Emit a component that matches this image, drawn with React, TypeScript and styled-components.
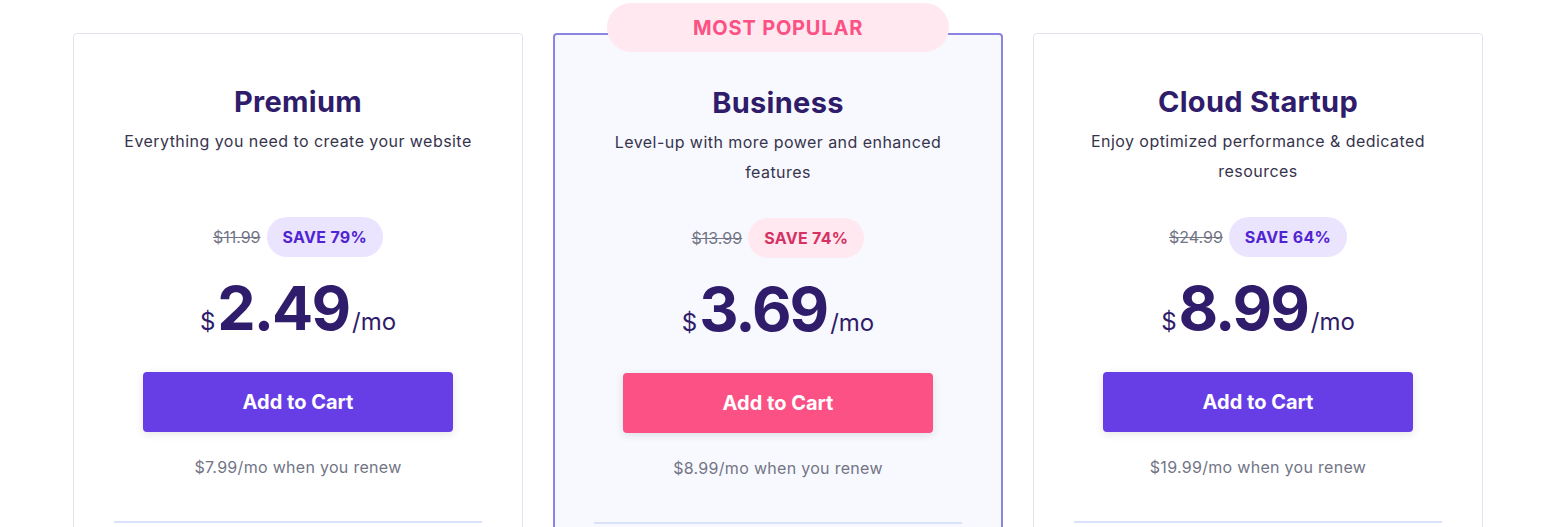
import styled, { createGlobalStyle } from "styled-components";

interface Plan {
  name: string;
  desc: string;
  oldPrice: string;
  save: string;
  price: string;
  renew: string;
  popular?: boolean;
}

const plans: Plan[] = [
  {
    name: "Premium",
    desc: "Everything you need to create your website",
    oldPrice: "$11.99",
    save: "SAVE 79%",
    price: "2.49",
    renew: "$7.99/mo when you renew",
  },
  {
    name: "Business",
    desc: "Level-up with more power and enhanced features",
    oldPrice: "$13.99",
    save: "SAVE 74%",
    price: "3.69",
    renew: "$8.99/mo when you renew",
    popular: true,
  },
  {
    name: "Cloud Startup",
    desc: "Enjoy optimized performance & dedicated resources",
    oldPrice: "$24.99",
    save: "SAVE 64%",
    price: "8.99",
    renew: "$19.99/mo when you renew",
  },
];

function App() {
  return (
    <>
      <GlobalStyle />
      <StyledPage>
        <StyledRow>
          {plans.map(plan => (
            <StyledCard key={plan.name} $popular={plan.popular}>
              {plan.popular && <StyledRibbon>MOST POPULAR</StyledRibbon>}
              <StyledTitle>{plan.name}</StyledTitle>
              <StyledDesc>{plan.desc}</StyledDesc>
              <StyledSaveRow>
                <StyledOld>{plan.oldPrice}</StyledOld>
                <StyledBadge $popular={plan.popular}>{plan.save}</StyledBadge>
              </StyledSaveRow>
              <StyledPrice>
                <StyledCurrency>$</StyledCurrency>
                <StyledAmount>{plan.price}</StyledAmount>
                <StyledPer>/mo</StyledPer>
              </StyledPrice>
              <StyledButton $popular={plan.popular}>Add to Cart</StyledButton>
              <StyledRenew>{plan.renew}</StyledRenew>
              <StyledDivider />
            </StyledCard>
          ))}
        </StyledRow>
      </StyledPage>
    </>
  );
}
export default App;

const GlobalStyle = createGlobalStyle`
  body {
    margin: 0;
    background: #ffffff;
    font-family: "Inter", "Noto Sans", sans-serif;
    overflow: hidden;
  }
`;

const StyledPage = styled.div`
  height: 527px;
  overflow: hidden;
  padding: 33px 0 0 73px;
  box-sizing: border-box;
`;

const StyledRow = styled.div`
  display: flex;
  gap: 30px;
  align-items: flex-start;
`;

const StyledCard = styled.div<{ $popular?: boolean }>`
  position: relative;
  width: 450px;
  min-height: 560px;
  box-sizing: border-box;
  display: flex;
  flex-direction: column;
  align-items: center;
  padding: ${p => (p.$popular ? "48px 39px 0" : "48px 40px 0")};
  border: ${p => (p.$popular ? "2px solid #8b84e2" : "1px solid #e1e4f0")};
  border-radius: 4px;
  background: ${p => (p.$popular ? "#f8f9fe" : "#ffffff")};
`;

const StyledRibbon = styled.div`
  position: absolute;
  top: -32px;
  left: 50%;
  transform: translateX(-50%);
  width: 342px;
  height: 49px;
  border-radius: 25px;
  background: #ffe8ef;
  color: #fc5185;
  font-size: 20px;
  font-weight: 700;
  letter-spacing: 0.8px;
  display: flex;
  align-items: center;
  justify-content: center;
`;

const StyledTitle = styled.h2`
  margin: 0 0 4px;
  font-size: 29px;
  line-height: 40px;
  font-weight: 700;
  letter-spacing: 0.3px;
  color: #2f1c6a;
`;

const StyledDesc = styled.p`
  margin: 0;
  min-height: 60px;
  max-width: 350px;
  font-size: 16px;
  line-height: 30px;
  letter-spacing: 0.45px;
  color: #36344d;
  text-align: center;
`;

const StyledSaveRow = styled.div`
  margin-top: 31px;
  display: flex;
  align-items: center;
  gap: 6px;
`;

const StyledOld = styled.span`
  font-size: 16px;
  color: #727586;
  text-decoration: line-through;
`;

const StyledBadge = styled.span<{ $popular?: boolean }>`
  height: 40px;
  padding: 0 16px;
  border-radius: 20px;
  display: flex;
  align-items: center;
  font-size: 16px;
  font-weight: 700;
  letter-spacing: 0.3px;
  background: ${p => (p.$popular ? "#ffe8ef" : "#ebe4ff")};
  color: ${p => (p.$popular ? "#d63163" : "#5025d1")};
`;

const StyledPrice = styled.div`
  margin-top: 15px;
  height: 72px;
  display: flex;
  align-items: baseline;
  color: #2f1c6a;
`;

const StyledCurrency = styled.span`
  font-size: 24px;
  margin-right: 2px;
`;

const StyledAmount = styled.span`
  font-size: 61px;
  line-height: 72px;
  font-weight: 700;
  letter-spacing: -2px;
`;

const StyledPer = styled.span`
  font-size: 24px;
  margin-left: 3px;
`;

const StyledButton = styled.button<{ $popular?: boolean }>`
  margin-top: 28px;
  width: 310px;
  height: 60px;
  border: none;
  border-radius: 4px;
  background: ${p => (p.$popular ? "#fc5185" : "#673de6")};
  color: #ffffff;
  font-family: inherit;
  font-size: 20px;
  font-weight: 700;
  box-shadow: 0 2px 8px rgba(29, 30, 32, 0.12);
  cursor: pointer;
`;

const StyledRenew = styled.p`
  margin: 23px 0 0;
  font-size: 16px;
  line-height: 24px;
  letter-spacing: 0.3px;
  color: #727586;
`;

const StyledDivider = styled.div`
  margin-top: 42px;
  width: 100%;
  height: 2px;
  background: #dae1fb;
`;
